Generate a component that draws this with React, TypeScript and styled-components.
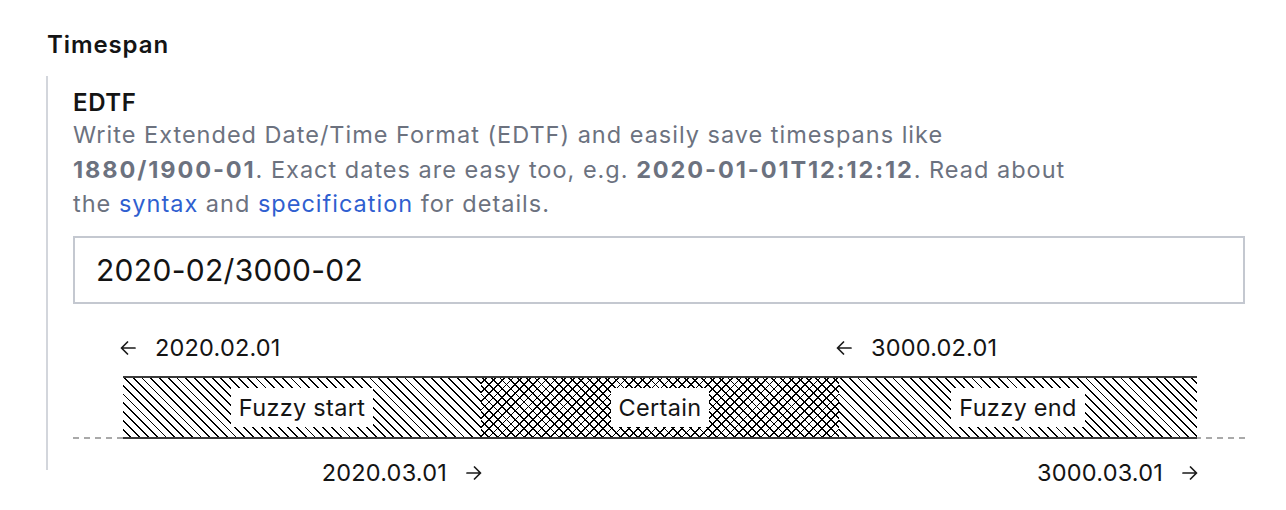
import React from "react";
import styled, { createGlobalStyle } from "styled-components";

const Global = createGlobalStyle`
  html, body { margin: 0; padding: 0; background: #ffffff; }
  body { font-family: Inter, "Noto Sans", "Liberation Sans", sans-serif; color: #141414; }
  * { box-sizing: border-box; }
`;

const Page = styled.div`
  padding: 30px 41px 40px 46px;
`;

const Legend = styled.div`
  font-size: 24px;
  font-weight: 600;
  line-height: 30px;
  letter-spacing: 0.9px;
  padding-left: 1px;
  color: #141414;
`;

const Fieldset = styled.div`
  margin-top: 16px;
  border-left: 2px solid #d3d6dc;
  padding: 12px 0 0 25px;
`;

const Label = styled.div`
  font-size: 24px;
  font-weight: 600;
  line-height: 30px;
  letter-spacing: 0.6px;
  color: #141414;
`;

const Help = styled.p`
  margin: 0;
  font-size: 23.5px;
  line-height: 34.5px;
  letter-spacing: 1px;
  color: #6c727f;
  strong { font-weight: 700; letter-spacing: 1.9px; }
  a { color: #2f5fd0; text-decoration: none; }
`;

const Input = styled.input`
  display: block;
  width: 100%;
  margin-top: 14px;
  height: 68px;
  border: 2px solid #c4c8d0;
  border-radius: 0;
  padding: 0 21px;
  font-family: inherit;
  font-size: 30px;
  letter-spacing: 0.3px;
  color: #141414;
  background: #fff;
  outline: none;
`;

const Timeline = styled.div`
  margin-top: 29px;
  display: flex;
  flex-direction: column;
  & > * { flex: none; }
`;

const LabelRow = styled.div<{ $bottom?: boolean }>`
  display: grid;
  grid-template-columns: repeat(3, 1fr);
  margin: ${(p) => (p.$bottom ? "19px 48px -18px 50px" : "0 48px 0 50px")};
  height: 30px;
  align-items: center;
`;

const DateLabel = styled.div<{ $col: number; $end?: boolean }>`
  grid-column: ${(p) => p.$col};
  justify-self: ${(p) => (p.$end ? "end" : "start")};
  display: inline-flex;
  align-items: center;
  gap: ${(p) => (p.$end ? "19px" : "19px")};
  margin-left: ${(p) => (p.$end ? "0" : "-3px")};
  margin-right: ${(p) => (p.$end ? "-1px" : "0")};
  font-size: 23.5px;
  letter-spacing: 0.2px;
  color: #141414;
  white-space: nowrap;
`;

const Arrow = styled.svg`
  display: block;
  width: 16px;
  height: 14px;
  flex: none;
`;

const Track = styled.div`
  margin-top: 13px;
  padding: 0 48px 0 50px;
  background-image: repeating-linear-gradient(to right, #a9a9a9 0 6px, transparent 6px 11px);
  background-size: 100% 2px;
  background-position: left bottom;
  background-repeat: no-repeat;
`;

const Bar = styled.div`
  display: grid;
  grid-template-columns: repeat(3, 1fr);
  height: 63px;
  border-top: 2px solid #3a3a3a;
  border-bottom: 2px solid #3a3a3a;
`;

const hatch = "repeating-linear-gradient(45deg, transparent 0 4.9px, #000 4.9px 6.2px)";
const hatchOther = "repeating-linear-gradient(-45deg, transparent 0 5px, #000 5px 6.2px)";

const Segment = styled.div<{ $cross?: boolean }>`
  display: flex;
  align-items: center;
  justify-content: center;
  background-color: #fff;
  background-image: ${(p) => (p.$cross ? `${hatch}, ${hatchOther}` : hatch)};
`;

const SegmentLabel = styled.span`
  background: #fff;
  padding: 5px 8px 4px;
  font-size: 23.5px;
  line-height: 30px;
  letter-spacing: 0.3px;
  color: #141414;
`;

const LeftArrow = () => (
  <Arrow viewBox="0 0 16 14" fill="none" stroke="#1a1a1a" strokeWidth="1.7" strokeLinecap="round" strokeLinejoin="round">
    <path d="M15 7H1.5M7.5 1L1.5 7L7.5 13" />
  </Arrow>
);

const RightArrow = () => (
  <Arrow viewBox="0 0 16 14" fill="none" stroke="#1a1a1a" strokeWidth="1.7" strokeLinecap="round" strokeLinejoin="round">
    <path d="M1 7H14.5M8.5 1L14.5 7L8.5 13" />
  </Arrow>
);

export default function App() {
  return (
    <>
      <Global />
      <Page>
        <Legend>Timespan</Legend>
        <Fieldset>
          <Label>EDTF</Label>
          <Help>
            Write Extended Date/Time Format (EDTF) and easily save timespans like
            <br />
            <strong>1880/1900-01</strong>. Exact dates are easy too, e.g.{" "}
            <strong>2020-01-01T12:12:12</strong>. Read about
            <br />
            the <a href="#">syntax</a> and <a href="#">specification</a> for details.
          </Help>
          <Input defaultValue="2020-02/3000-02" />
          <Timeline>
            <LabelRow>
              <DateLabel $col={1}>
                <LeftArrow />
                2020.02.01
              </DateLabel>
              <DateLabel $col={3}>
                <LeftArrow />
                3000.02.01
              </DateLabel>
            </LabelRow>
            <Track>
              <Bar>
                <Segment>
                  <SegmentLabel>Fuzzy start</SegmentLabel>
                </Segment>
                <Segment $cross>
                  <SegmentLabel>Certain</SegmentLabel>
                </Segment>
                <Segment>
                  <SegmentLabel>Fuzzy end</SegmentLabel>
                </Segment>
              </Bar>
            </Track>
            <LabelRow $bottom>
              <DateLabel $col={1} $end>
                2020.03.01
                <RightArrow />
              </DateLabel>
              <DateLabel $col={3} $end>
                3000.03.01
                <RightArrow />
              </DateLabel>
            </LabelRow>
          </Timeline>
        </Fieldset>
      </Page>
    </>
  );
}
